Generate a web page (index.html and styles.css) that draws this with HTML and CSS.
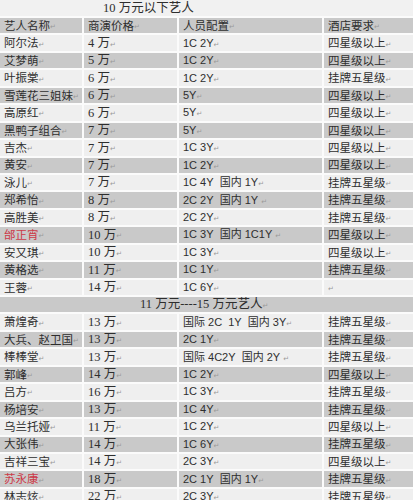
FILE: index.html
```html
<!DOCTYPE html>
<html lang="zh-CN">
<head>
<meta charset="utf-8">
<title>艺人报价</title>
<link rel="stylesheet" href="styles.css">
</head>
<body>
<div class="sheet">
  <div class="cell title title-first">10 万元以下艺人</div>

  <div class="cell g">艺人名称<i>↵</i></div><div class="cell g">商演价格<i>↵</i></div><div class="cell g">人员配置<i>↵</i></div><div class="cell g">酒店要求<i>↵</i></div>

  <div class="cell">阿尔法<i>↵</i></div><div class="cell num">4 万<i>↵</i></div><div class="cell cfg">1C 2Y<i>↵</i></div><div class="cell">四星级以上<i>↵</i></div>
  <div class="cell g">艾梦萌<i>↵</i></div><div class="cell g num">5 万<i>↵</i></div><div class="cell g cfg">1C 2Y<i>↵</i></div><div class="cell g">四星级以上<i>↵</i></div>
  <div class="cell">叶振棠<i>↵</i></div><div class="cell num">6 万<i>↵</i></div><div class="cell cfg">1C 2Y<i>↵</i></div><div class="cell">挂牌五星级<i>↵</i></div>
  <div class="cell g">雪莲花三姐妹<i>↵</i></div><div class="cell g num">6 万<i>↵</i></div><div class="cell g cfg">5Y<i>↵</i></div><div class="cell g">四星级以上<i>↵</i></div>
  <div class="cell">高原红<i>↵</i></div><div class="cell num">6 万<i>↵</i></div><div class="cell cfg">5Y<i>↵</i></div><div class="cell">四星级以上<i>↵</i></div>
  <div class="cell g">黑鸭子组合<i>↵</i></div><div class="cell g num">7 万<i>↵</i></div><div class="cell g cfg">5Y<i>↵</i></div><div class="cell g">四星级以上<i>↵</i></div>
  <div class="cell">吉杰<i>↵</i></div><div class="cell num">7 万<i>↵</i></div><div class="cell cfg">1C 3Y<i>↵</i></div><div class="cell">四星级以上<i>↵</i></div>
  <div class="cell g">黄安<i>↵</i></div><div class="cell g num">7 万<i>↵</i></div><div class="cell g cfg">1C 2Y<i>↵</i></div><div class="cell g">四星级以上<i>↵</i></div>
  <div class="cell">泳儿<i>↵</i></div><div class="cell num">7 万<i>↵</i></div><div class="cell cfg">1C 4Y&nbsp; 国内 1Y<i>↵</i></div><div class="cell">挂牌五星级<i>↵</i></div>
  <div class="cell g">郑希怡<i>↵</i></div><div class="cell g num">8 万<i>↵</i></div><div class="cell g cfg">2C 2Y&nbsp; 国内 1Y&nbsp; <i>↵</i></div><div class="cell g">挂牌五星级<i>↵</i></div>
  <div class="cell">高胜美<i>↵</i></div><div class="cell num">8 万<i>↵</i></div><div class="cell cfg">2C 2Y<i>↵</i></div><div class="cell">挂牌五星级<i>↵</i></div>
  <div class="cell g red">邰正宵<i>↵</i></div><div class="cell g num">10 万<i>↵</i></div><div class="cell g cfg">1C 3Y&nbsp; 国内 1C1Y&nbsp; <i>↵</i></div><div class="cell g">四星级以上<i>↵</i></div>
  <div class="cell">安又琪<i>↵</i></div><div class="cell num">10 万<i>↵</i></div><div class="cell cfg">1C 3Y<i>↵</i></div><div class="cell">四星级以上<i>↵</i></div>
  <div class="cell g">黄格选<i>↵</i></div><div class="cell g num">11 万<i>↵</i></div><div class="cell g cfg">1C 1Y<i>↵</i></div><div class="cell g">挂牌五星级<i>↵</i></div>
  <div class="cell">王蓉<i>↵</i></div><div class="cell num">14 万<i>↵</i></div><div class="cell cfg">1C 6Y<i>↵</i></div><div class="cell"><i>↵</i></div>

  <div class="cell g title title-second">11 万元----15 万元艺人<i>↵</i></div>

  <div class="cell">萧煌奇<i>↵</i></div><div class="cell num">13 万<i>↵</i></div><div class="cell cfg">国际 2C&nbsp; 1Y&nbsp; 国内 3Y<i>↵</i></div><div class="cell">挂牌五星级<i>↵</i></div>
  <div class="cell g">大兵、赵卫国<i>↵</i></div><div class="cell g num">13 万<i>↵</i></div><div class="cell g cfg">2C 1Y<i>↵</i></div><div class="cell g">挂牌五星级<i>↵</i></div>
  <div class="cell">棒棒堂<i>↵</i></div><div class="cell num">13 万<i>↵</i></div><div class="cell cfg">国际 4C2Y&nbsp; 国内 2Y&nbsp; <i>↵</i></div><div class="cell">挂牌五星级<i>↵</i></div>
  <div class="cell g">郭峰<i>↵</i></div><div class="cell g num">14 万<i>↵</i></div><div class="cell g cfg">1C 2Y<i>↵</i></div><div class="cell g">四星级以上<i>↵</i></div>
  <div class="cell">吕方<i>↵</i></div><div class="cell num">16 万<i>↵</i></div><div class="cell cfg">1C 3Y<i>↵</i></div><div class="cell">挂牌五星级<i>↵</i></div>
  <div class="cell g">杨培安<i>↵</i></div><div class="cell g num">13 万<i>↵</i></div><div class="cell g cfg">1C 4Y<i>↵</i></div><div class="cell g">挂牌五星级<i>↵</i></div>
  <div class="cell">乌兰托娅<i>↵</i></div><div class="cell num">11 万<i>↵</i></div><div class="cell cfg">1C 2Y<i>↵</i></div><div class="cell">四星级以上<i>↵</i></div>
  <div class="cell g">大张伟<i>↵</i></div><div class="cell g num">14 万<i>↵</i></div><div class="cell g cfg">1C 6Y<i>↵</i></div><div class="cell g">挂牌五星级<i>↵</i></div>
  <div class="cell">吉祥三宝<i>↵</i></div><div class="cell num">14 万<i>↵</i></div><div class="cell cfg">2C 3Y<i>↵</i></div><div class="cell">四星级以上<i>↵</i></div>
  <div class="cell g red">苏永康<i>↵</i></div><div class="cell g num">18 万<i>↵</i></div><div class="cell g cfg">2C 1Y&nbsp; 国内 1Y<i>↵</i></div><div class="cell g">挂牌五星级<i>↵</i></div>
  <div class="cell">林志炫<i>↵</i></div><div class="cell num">22 万<i>↵</i></div><div class="cell cfg">2C 3Y<i>↵</i></div><div class="cell">挂牌五星级<i>↵</i></div>
</div>
</body>
</html>
```

FILE: styles.css
```css
html, body {
  margin: 0;
  padding: 0;
  background: #fbfbfb;
}

.sheet {
  display: grid;
  grid-template-columns: 82px 93px 143px 89px;
  grid-template-rows: 16px;
  grid-auto-rows: 15.45px;
  column-gap: 2px;
  row-gap: 2px;
  width: 413px;
  font-family: "Noto Sans CJK SC", sans-serif;
  font-size: 11.5px;
  color: #2e2e2e;
}

.cell {
  display: flex;
  align-items: center;
  padding-left: 4px;
  background: #efefef;
  white-space: nowrap;
  line-height: 1;
}

.cell.g {
  background: #c9c9c9;
}

.cell i {
  font-style: normal;
  font-family: "DejaVu Sans", sans-serif;
  font-size: 7px;
  color: #9a9a9a;
  position: relative;
  top: 2px;
}

.num {
  font-family: "Liberation Serif", "Noto Sans CJK SC", serif;
  font-size: 12.5px;
}

.cfg {
  font-family: "Liberation Sans", "Noto Sans CJK SC", sans-serif;
  font-size: 11px;
}

.red {
  color: #cc3a48;
}

.title {
  grid-column: 1 / -1;
  font-family: "Liberation Serif", "Noto Sans CJK SC", serif;
  font-size: 12.5px;
}

.title-first {
  padding-left: 103px;
  background: #f1f1f1;
}

.title-second {
  padding-left: 140px;
}
```
